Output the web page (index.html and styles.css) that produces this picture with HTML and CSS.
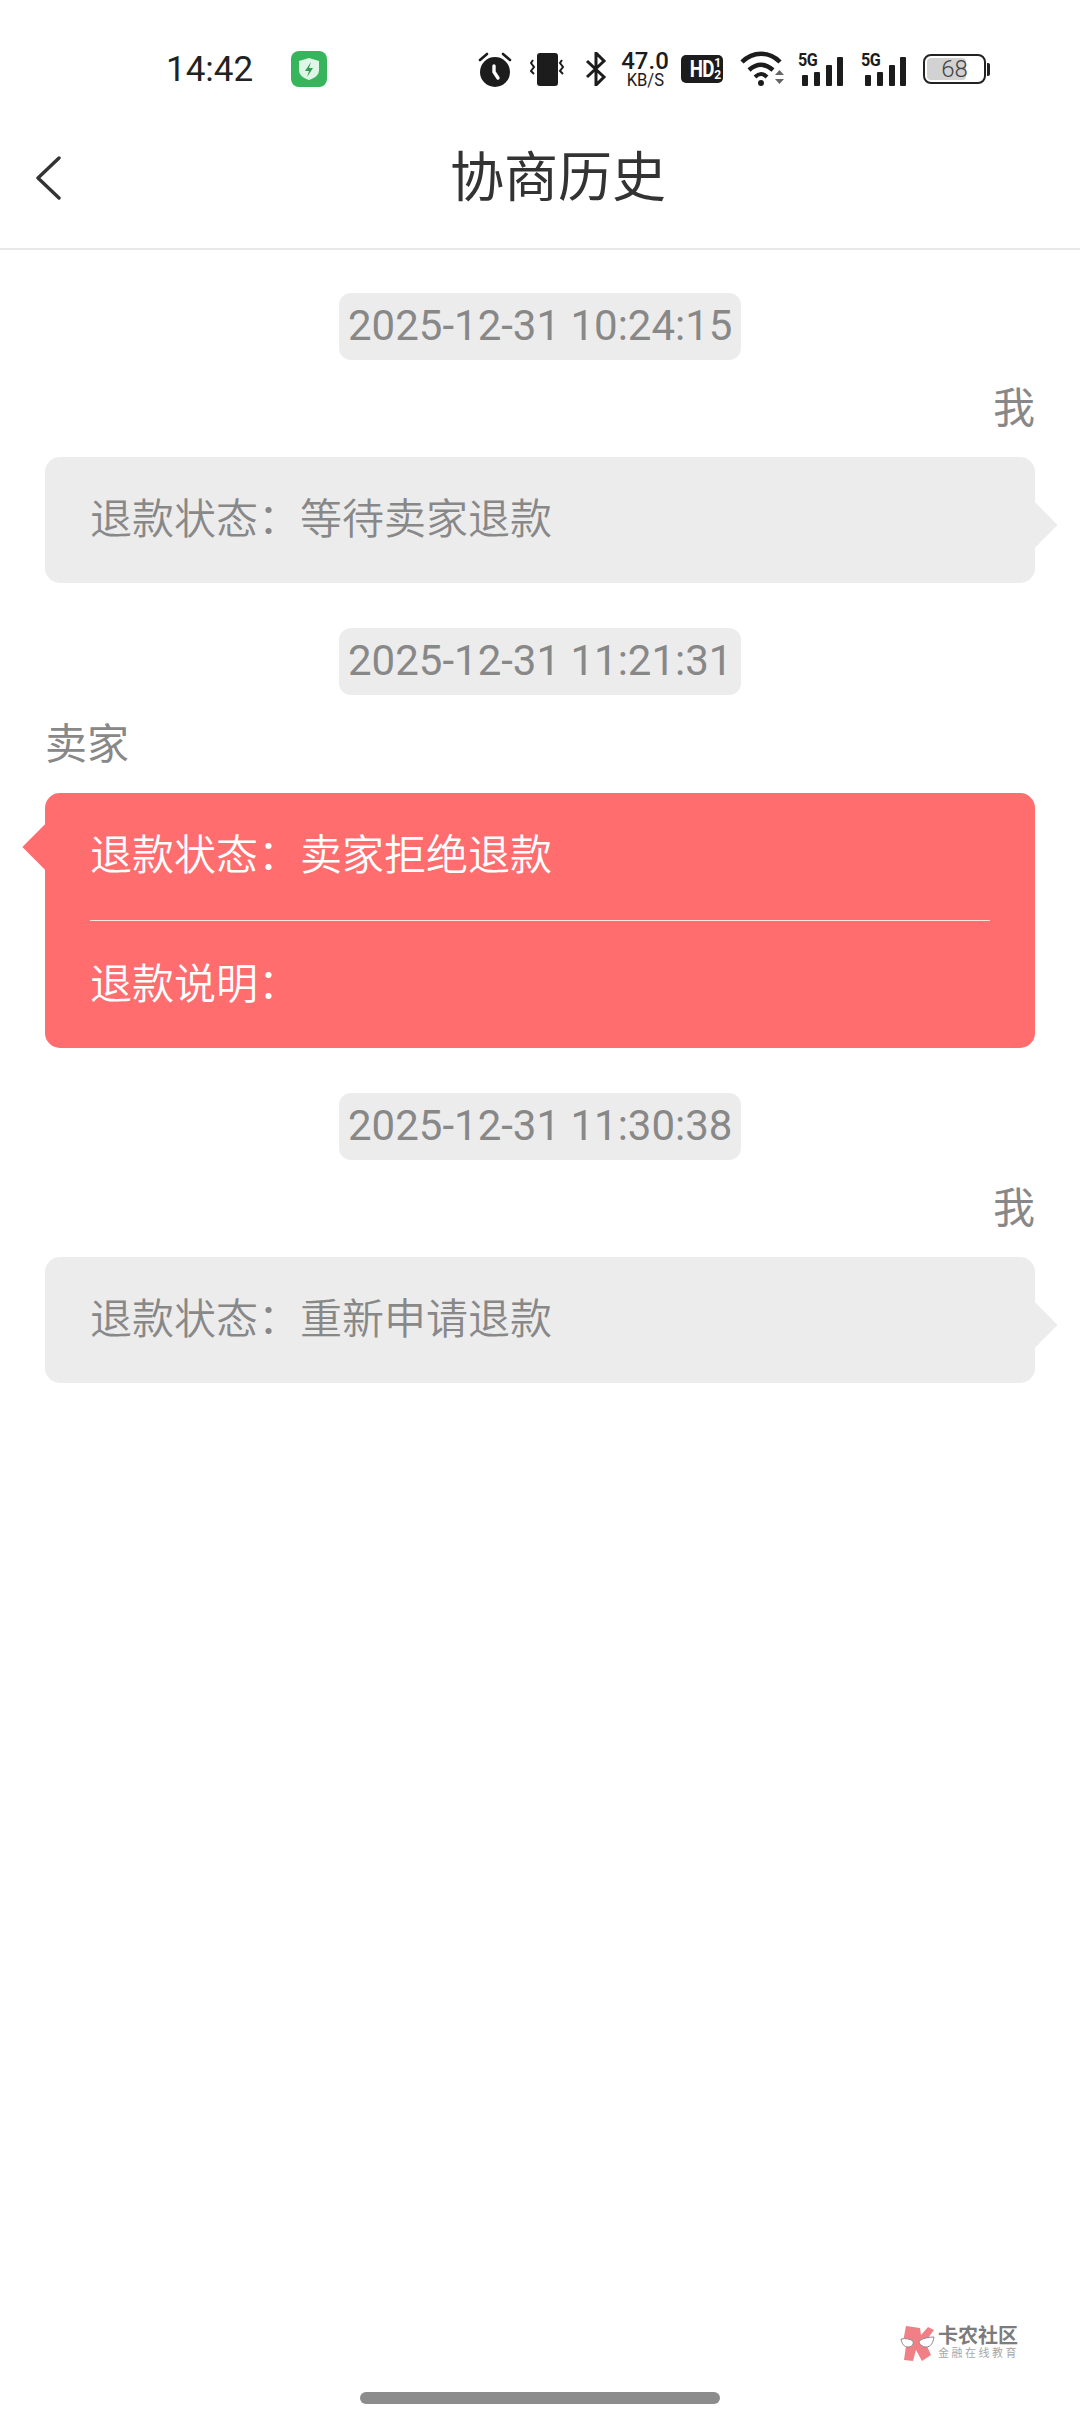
FILE: index.html
```html
<!DOCTYPE html>
<html lang="zh-CN">
<head>
<meta charset="utf-8">
<title>协商历史</title>
<link rel="stylesheet" href="styles.css">
</head>
<body>
<div class="page">
  <div class="statusbar">
    <span class="clock">14:42</span>
    <svg class="app-icon" viewBox="0 0 36 36" width="36" height="36">
      <rect width="36" height="36" rx="8" fill="#37b55c"/>
      <path d="M18 7l10 3v9c0 5-4 8-10 10-6-2-10-5-10-10v-9z" fill="#dff5e6"/>
      <path d="M20 11l-6 9h4l-2 6 6-9h-4z" fill="#2f9e50"/>
    </svg>
    <div class="status-right">
      <svg class="ic-alarm" viewBox="0 0 34 36" width="34" height="36">
        <circle cx="17" cy="21" r="15" fill="#1c1c1c"/>
        <path d="M2 9l7-6M32 9l-7-6" stroke="#1c1c1c" stroke-width="2.6" stroke-linecap="round"/>
        <path d="M16 15v6l4 6" fill="none" stroke="#fff" stroke-width="3.4" stroke-linecap="round"/>
      </svg>
      <svg class="ic-vib" viewBox="0 0 36 36" width="36" height="36">
        <rect x="7" y="2" width="21" height="33" rx="3" fill="#1c1c1c"/>
        <path d="M3 9l-2 3 3 4-3 4 3 3M32 9l-2 3 3 4-3 4 3 3" fill="none" stroke="#1c1c1c" stroke-width="2"/>
      </svg>
      <svg class="ic-bt" viewBox="0 0 22 34" width="22" height="34">
        <path d="M2 9l17 16-8 8V1l8 8L2 25" fill="none" stroke="#1c1c1c" stroke-width="3"/>
      </svg>
      <div class="speed"><span class="speed-num">47.0</span><span class="speed-unit">KB/S</span></div>
      <div class="hd"><span class="hd-main">HD</span><span class="hd-sub"><span>1</span><span>2</span></span></div>
      <svg class="ic-wifi" viewBox="0 0 46 36" width="46" height="36">
        <path d="M2 11C13 0 29 0 40 11" fill="none" stroke="#1c1c1c" stroke-width="4.5"/>
        <path d="M9 19c8-7 16-7 24 0" fill="none" stroke="#1c1c1c" stroke-width="4.5"/>
        <path d="M15 26c4-4 8-4 12 0" fill="none" stroke="#1c1c1c" stroke-width="4"/>
        <circle cx="21" cy="32" r="3" fill="#1c1c1c"/>
        <path d="M35 24h9l-4.500-5zM35 28h9l-4.500 5z" fill="#666"/>
      </svg>
      <div class="signal">
        <span class="net">5G</span>
        <span class="bar b1"></span><span class="bar b2"></span><span class="bar b3"></span><span class="bar b4"></span>
      </div>
      <div class="signal second">
        <span class="net">5G</span>
        <span class="bar b1"></span><span class="bar b2"></span><span class="bar b3"></span><span class="bar b4"></span>
      </div>
      <div class="battery">
        <div class="battery-body"><span class="battery-fill"></span><span class="battery-num">68</span></div>
        <span class="battery-cap"></span>
      </div>
    </div>
  </div>

  <header class="navbar">
    <svg class="back" viewBox="0 0 26 44" width="26" height="44">
      <path d="M24 2L3 22l21 20" fill="none" stroke="#333" stroke-width="3.400" stroke-linecap="round" stroke-linejoin="round"/>
    </svg>
    <h1 class="title">协商历史</h1>
  </header>

  <main class="list">
    <section class="entry">
      <div class="time-wrap"><span class="time">2025-12-31 10:24:15</span></div>
      <div class="who who-right">我</div>
      <div class="bubble bubble-mine"><p class="line">退款状态：等待卖家退款</p></div>
    </section>
    <section class="entry">
      <div class="time-wrap"><span class="time">2025-12-31 11:21:31</span></div>
      <div class="who who-seller">卖家</div>
      <div class="bubble bubble-seller">
        <p class="line">退款状态：卖家拒绝退款</p>
        <p class="line line-split">退款说明：</p>
      </div>
    </section>
    <section class="entry">
      <div class="time-wrap"><span class="time">2025-12-31 11:30:38</span></div>
      <div class="who who-right">我</div>
      <div class="bubble bubble-mine"><p class="line">退款状态：重新申请退款</p></div>
    </section>
  </main>

  <footer class="bottom">
    <div class="watermark">
      <svg class="wm-logo" viewBox="0 0 36 36" width="36" height="36">
        <path d="M6 1l14 2 1 7 7-8 6 3-9 12 6 13-9 6-6-11-3 11-9-1 2-14-3-4z" fill="#ee6a72"/>
        <path d="M1 14c5-1 9 0 12 2 1 3-1 6-5 6s-6-3-7-8zM19 16c4-3 10-4 15-4-1 6-3 10-8 10-4 0-7-3-7-6z" fill="#fff" stroke="#777" stroke-width="1"/>
      </svg>
      <div class="wm-text">
        <span class="wm-name">卡农社区</span>
        <span class="wm-sub">金融在线教育</span>
      </div>
    </div>
    <div class="home-bar"></div>
  </footer>
</div>
</body>
</html>
```
FILE: styles.css
```css
* { box-sizing: border-box; }
html, body { margin: 0; padding: 0; background: #fff; }
body { font-family: "Roboto", "Noto Sans CJK SC", sans-serif; }
.page { width: 1080px; height: 2412px; display: flex; flex-direction: column; overflow: hidden; }

.statusbar { height: 96px; flex: none; display: flex; align-items: center; padding: 42px 0 0 166px; color: #1c1c1c; }
.clock { font-size: 35px; width: 86px; color: #222; white-space: nowrap; }
.app-icon { margin-left: 39px; flex: none; }
.status-right { display: flex; align-items: center; margin-left: 151px; }
.ic-alarm { flex: none; }
.ic-vib { flex: none; margin-left: 18px; }
.ic-bt { flex: none; margin-left: 19px; }
.speed { width: 46px; margin-left: 15px; display: flex; flex-direction: column; align-items: center; line-height: 1; }
.speed-num { font-size: 24px; line-height: 20px; font-weight: 500; }
.speed-unit { font-size: 18px; line-height: 17px; transform: scaleX(0.92); white-space: nowrap; }
.hd { width: 42px; height: 28px; margin-left: 13px; background: #1c1c1c; border-radius: 5px; color: #fff; display: flex; align-items: center; justify-content: center; font-weight: 700; }
.hd-main { font-size: 24px; line-height: 28px; transform: scaleX(0.78); transform-origin: right; letter-spacing: -1px; }
.hd-sub { display: flex; flex-direction: column; font-size: 12px; line-height: 12px; margin-left: 1px; }
.ic-wifi { flex: none; margin-left: 17px; }
.signal { width: 48px; height: 34px; margin-left: 12px; position: relative; flex: none; }
.signal.second { margin-left: 15px; }
.net { position: absolute; left: 0; top: -2px; font-size: 19px; font-weight: 700; letter-spacing: -0.5px; transform: scaleX(0.85); transform-origin: left; line-height: 20px; }
.bar { position: absolute; bottom: 0; width: 6px; background: #1c1c1c; border-radius: 1px; }
.b1 { left: 4px; height: 11px; }
.b2 { left: 16px; height: 14px; }
.b3 { left: 28px; height: 21px; }
.b4 { left: 39px; height: 29px; }
.battery { display: flex; align-items: center; margin-left: 14px; flex: none; }
.battery-body { width: 63px; height: 30px; border: 2.5px solid #222; border-radius: 8px; position: relative; display: flex; align-items: center; justify-content: center; padding: 2px; }
.battery-fill { position: absolute; left: 2px; top: 2px; bottom: 2px; width: 39px; background: #d2d2d2; border-radius: 4px; }
.battery-num { position: relative; font-size: 24px; color: #444; font-weight: 300; }
.battery-cap { width: 3px; height: 13px; background: #222; margin-left: 1px; border-radius: 0 2px 2px 0; }

.navbar { height: 154px; flex: none; display: flex; align-items: center; justify-content: center; position: relative; border-bottom: 2px solid #e8e8e8; padding: 16px 0 2px 36px; }
.back { position: absolute; left: 35px; top: 60px; }
.title { margin: 0; font-size: 54px; font-weight: 400; color: #333; line-height: 1.2; }

.list { flex: 1; padding: 43px 45px 0; display: flex; flex-direction: column; gap: 45px; }
.entry { display: flex; flex-direction: column; }
.time-wrap { display: flex; justify-content: center; }
.time { height: 67px; padding: 0 9px; background: #ececec; border-radius: 12px; color: #888; font-size: 42px; line-height: 65px; width: 402px; text-align: center; white-space: nowrap; }
.who { height: 97px; padding-top: 21px; font-size: 42px; line-height: 56px; color: #888; }
.who-seller { height: 98px; padding-top: 22px; }
.who-right { text-align: right; }
.bubble { position: relative; border-radius: 15px; padding: 0 45px; }
.bubble::after { content: ""; position: absolute; width: 32px; height: 32px; transform: rotate(45deg); }
.bubble-mine { background: #ececec; color: #888; }
.bubble-mine::after { right: -16px; top: 52px; background: #ececec; }
.bubble-seller { background: #ff6d6f; color: #fff; }
.bubble-seller::after { left: -16px; top: 38px; background: #ff6d6f; }
.line { margin: 0; height: 127px; font-size: 42px; line-height: 126px; font-weight: 350; white-space: nowrap; }
.bubble-mine .line { height: 126px; }
.line-split { height: 128px; line-height: 127px; border-top: 1px solid #ffe4e4; }

.bottom { flex: none; height: 92px; position: relative; }
.watermark { position: absolute; left: 900px; top: 5px; display: flex; align-items: center; gap: 2px; opacity: 0.85; }
.wm-logo { flex: none; }
.wm-text { display: flex; flex-direction: column; }
.wm-name { font-size: 20px; font-weight: 700; line-height: 21px; color: #666; white-space: nowrap; }
.wm-sub { font-size: 11px; line-height: 14px; color: #999; letter-spacing: 2.5px; white-space: nowrap; }
.home-bar { position: absolute; left: 360px; top: 72px; width: 360px; height: 12px; border-radius: 6px; background: #8c8c8c; }
```
